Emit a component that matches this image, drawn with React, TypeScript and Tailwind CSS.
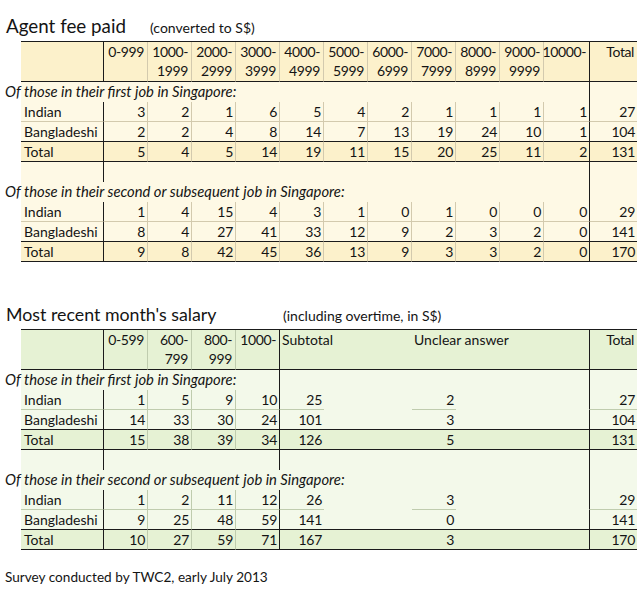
import clsx from 'clsx';

type Edge = 'black' | 'grid' | 'none';

type Theme = { head: string; data: string; gridR: string; gridB: string };

type Col = { w: string; edge: Edge; line: boolean; left?: boolean };

type Seg = { w: string; edge: Edge };

const BLACK_R = 'border-r border-r-[#1b1b1b]';
const BLACK_B = 'border-b border-b-[#1b1b1b]';

const yellow: Theme = {
  head: 'bg-[#fcf1cb]',
  data: 'bg-[#fef9e5]',
  gridR: 'border-r border-r-[#d3caae]',
  gridB: 'border-b border-b-[#d3caae]'
};

const green: Theme = {
  head: 'bg-[#e6f2d4]',
  data: 'bg-[#f3f9ea]',
  gridR: 'border-r border-r-[#bfccae]',
  gridB: 'border-b border-b-[#bfccae]'
};

const edgeClass = (edge: Edge, theme: Theme) => (edge === 'black' ? BLACK_R : edge === 'grid' ? theme.gridR : '');

const w44: Col = { w: 'w-[44px]', edge: 'grid', line: true };

const feeCols: Col[] = [
  { w: 'w-[83px]', edge: 'black', line: true, left: true },
  w44, w44, w44, w44, w44, w44, w44, w44, w44, w44,
  { w: 'w-[46px]', edge: 'black', line: true },
  { w: 'w-[47px]', edge: 'none', line: true }
];

const salaryCols: Col[] = [
  { w: 'w-[83px]', edge: 'black', line: true, left: true },
  w44, w44, w44,
  { w: 'w-[44px]', edge: 'black', line: true },
  { w: 'w-[44px]', edge: 'none', line: true },
  { w: 'w-[88px]', edge: 'none', line: false },
  { w: 'w-[44px]', edge: 'none', line: true },
  { w: 'w-[134px]', edge: 'black', line: false },
  { w: 'w-[47px]', edge: 'none', line: true }
];

type Head = { lines: string[]; left?: boolean };

const feeHead: Head[] = [
  { lines: [] },
  { lines: ['0-999'] },
  { lines: ['1000-', '1999'] },
  { lines: ['2000-', '2999'] },
  { lines: ['3000-', '3999'] },
  { lines: ['4000-', '4999'] },
  { lines: ['5000-', '5999'] },
  { lines: ['6000-', '6999'] },
  { lines: ['7000-', '7999'] },
  { lines: ['8000-', '8999'] },
  { lines: ['9000-', '9999'] },
  { lines: ['10000-'] },
  { lines: ['Total'] }
];

const salaryHead: Head[] = [
  { lines: [] },
  { lines: ['0-599'] },
  { lines: ['600-', '799'] },
  { lines: ['800-', '999'] },
  { lines: ['1000-'] },
  { lines: ['Subtotal'], left: true },
  { lines: [] },
  { lines: ['Unclear answer'], left: true },
  { lines: [] },
  { lines: ['Total'] }
];

type Block = { title: string; rows: string[][]; split: Seg[] };

const feeBlocks: Block[] = [
  {
    title: 'Of those in their first job in Singapore:',
    split: [{ w: 'w-[569px]', edge: 'black' }, { w: 'w-[47px]', edge: 'none' }],
    rows: [
      ['Indian', '3', '2', '1', '6', '5', '4', '2', '1', '1', '1', '1', '27'],
      ['Bangladeshi', '2', '2', '4', '8', '14', '7', '13', '19', '24', '10', '1', '104'],
      ['Total', '5', '4', '5', '14', '19', '11', '15', '20', '25', '11', '2', '131']
    ]
  },
  {
    title: 'Of those in their second or subsequent job in Singapore:',
    split: [{ w: 'w-[569px]', edge: 'black' }, { w: 'w-[47px]', edge: 'none' }],
    rows: [
      ['Indian', '1', '4', '15', '4', '3', '1', '0', '1', '0', '0', '0', '29'],
      ['Bangladeshi', '8', '4', '27', '41', '33', '12', '9', '2', '3', '2', '0', '141'],
      ['Total', '9', '8', '42', '45', '36', '13', '9', '3', '3', '2', '0', '170']
    ]
  }
];

const salaryBlocks: Block[] = [
  {
    title: 'Of those in their first job in Singapore:',
    split: [{ w: 'w-[259px]', edge: 'black' }, { w: 'w-[310px]', edge: 'black' }, { w: 'w-[47px]', edge: 'none' }],
    rows: [
      ['Indian', '1', '5', '9', '10', '25', '', '2', '', '27'],
      ['Bangladeshi', '14', '33', '30', '24', '101', '', '3', '', '104'],
      ['Total', '15', '38', '39', '34', '126', '', '5', '', '131']
    ]
  },
  {
    title: 'Of those in their second or subsequent job in Singapore:',
    split: [{ w: 'w-[569px]', edge: 'black' }, { w: 'w-[47px]', edge: 'none' }],
    rows: [
      ['Indian', '1', '2', '11', '12', '26', '', '3', '', '29'],
      ['Bangladeshi', '9', '25', '48', '59', '141', '', '0', '', '141'],
      ['Total', '10', '27', '59', '71', '167', '', '3', '', '170']
    ]
  }
];

const feeGap: Seg[] = [
  { w: 'w-[83px]', edge: 'black' },
  { w: 'w-[486px]', edge: 'black' },
  { w: 'w-[47px]', edge: 'none' }
];

const salaryGap: Seg[] = [
  { w: 'w-[83px]', edge: 'black' },
  { w: 'w-[176px]', edge: 'black' },
  { w: 'w-[310px]', edge: 'black' },
  { w: 'w-[47px]', edge: 'none' }
];

type TableProps = { theme: Theme; cols: Col[]; head: Head[]; blocks: Block[]; gap: Seg[] };

const SheetTable = ({ theme, cols, head, blocks, gap }: TableProps) => (
  <div className="ml-[21px] w-[616px]">
    <div className={clsx('flex h-[41px] border-t border-t-[#1b1b1b]', theme.head)}>
      {cols.map((c, i) => (
        <div
          key={i}
          className={clsx(
            'flex h-full shrink-0 flex-col leading-[19px]',
            c.w,
            BLACK_B,
            edgeClass(c.edge, theme),
            head[i].left ? 'items-start pl-[2px]' : 'items-end pr-[3px] tracking-[-0.4px]'
          )}
        >
          {head[i].lines.map((t) => (
            <span key={t} className="relative whitespace-nowrap">{t}</span>
          ))}
        </div>
      ))}
    </div>

    {blocks.map((b, bi) => (
      <div key={bi}>
        {bi > 0 && (
          <div className={clsx('flex h-[20px]', theme.data)}>
            {gap.map((s, i) => (
              <div key={i} className={clsx('h-full shrink-0', s.w, edgeClass(s.edge, theme))} />
            ))}
          </div>
        )}
        <div className={clsx('flex h-[20px]', theme.data)}>
          {b.split.map((s, i) => (
            <div key={i} className={clsx('h-full shrink-0 leading-[18px]', s.w, edgeClass(s.edge, theme))}>
              {i === 0 && <span className="relative -ml-[16px] whitespace-nowrap text-[14.8px] italic">{b.title}</span>}
            </div>
          ))}
        </div>
        {b.rows.map((row, ri) => (
          <div key={ri} className={clsx('flex h-[20px]', ri === 2 ? theme.head : theme.data)}>
            {cols.map((c, i) => (
              <div
                key={i}
                className={clsx(
                  'h-full shrink-0 whitespace-nowrap leading-[19px]',
                  c.w,
                  edgeClass(c.edge, theme),
                  ri === 0 ? (c.line ? theme.gridB : 'border-b border-b-transparent') : BLACK_B,
                  c.left ? 'pl-[3px] text-left' : 'pr-[2px] text-right tracking-[-0.3px]'
                )}
              >
                {row[i]}
              </div>
            ))}
          </div>
        ))}
      </div>
    ))}
  </div>
);

export default function App() {
  return (
    <div className="h-[590px] w-[640px] bg-white font-['Lato',sans-serif] text-[14px] text-[#141414]">
      <div className="flex h-[41px] items-end">
        <div className="flex items-baseline leading-[26px]">
          <span className="w-[150px] shrink-0 pl-[6px] text-[18.8px]">Agent fee paid</span>
          <span className="text-[14px]">(converted to S$)</span>
        </div>
      </div>
      <SheetTable theme={yellow} cols={feeCols} head={feeHead} blocks={feeBlocks} gap={feeGap} />

      <div className="flex h-[67px] items-end">
        <div className="flex items-baseline leading-[26px]">
          <span className="w-[283px] shrink-0 pl-[6px] text-[17.8px]">Most recent month's salary</span>
          <span className="text-[14px]">(including overtime, in S$)</span>
        </div>
      </div>
      <SheetTable theme={green} cols={salaryCols} head={salaryHead} blocks={salaryBlocks} gap={salaryGap} />

      <p className="mt-[17px] pl-[5px] text-[13.6px] leading-[20px]">Survey conducted by TWC2, early July 2013</p>
    </div>
  );
}
